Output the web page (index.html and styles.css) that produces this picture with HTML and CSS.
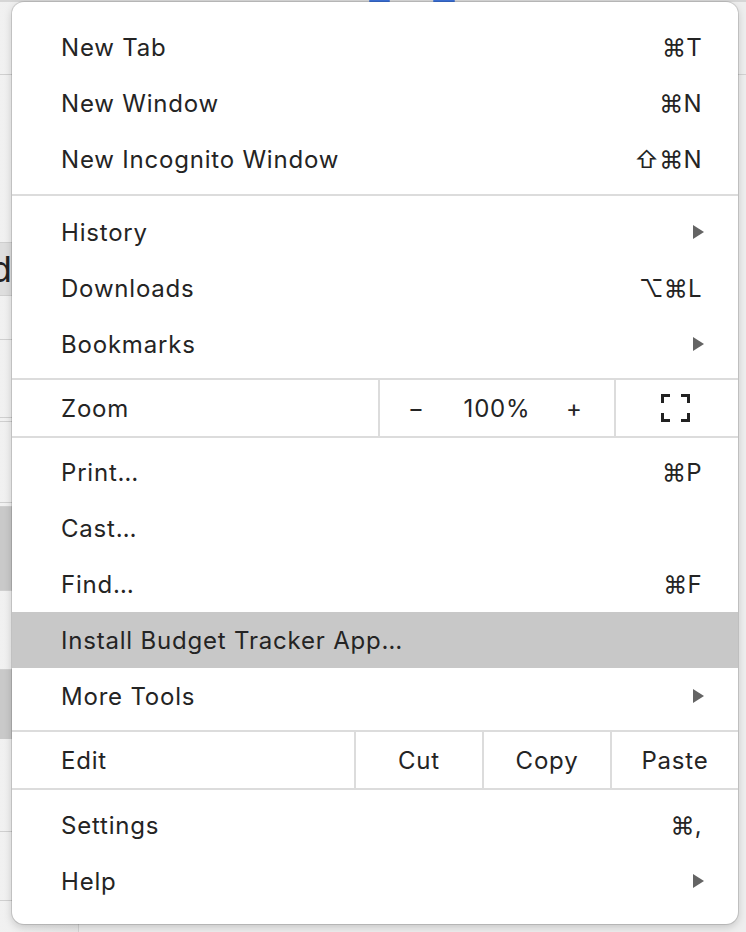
FILE: index.html
```html
<!DOCTYPE html>
<html>
<head>
<meta charset="utf-8">
<link rel="stylesheet" href="styles.css">
</head>
<body>
<div class="backdrop">
  <div class="topbar"><span class="tab-mark first"></span><span class="tab-mark second"></span></div>
  <div class="page">
    <div class="sidebar">
      <div class="sb-row h72"></div>
      <div class="sb-row h167 line"></div>
      <div class="sb-row h53 line shade1"><span class="cut-letter"><span>d</span></span></div>
      <div class="sb-row h44 line"></div>
      <div class="sb-row h78 line"></div>
      <div class="sb-row h4 line"></div>
      <div class="sb-row h81 line"></div>
      <div class="sb-row h4 line"></div>
      <div class="sb-row h80 line shade2"></div>
      <div class="sb-row h79 line"></div>
      <div class="sb-row h70 line shade2"></div>
      <div class="sb-row h92"></div>
      <div class="sb-row h69 line"></div>
      <div class="sb-row h30 line"></div>
    </div>
    <div class="main-area">
      <div class="main-top"></div>
    </div>
  </div>
</div>

<div class="menu">
  <div class="section sec-first">
    <div class="item"><span class="label">New Tab</span><span class="key">⌘T</span></div>
    <div class="item"><span class="label">New Window</span><span class="key">⌘N</span></div>
    <div class="item"><span class="label">New Incognito Window</span><span class="key">⇧⌘N</span></div>
  </div>
  <div class="rule"></div>
  <div class="section sec-second">
    <div class="item"><span class="label">History</span><svg class="arrow" width="11" height="14" viewBox="0 0 11 14"><polygon points="0,0 11,7 0,14" /></svg></div>
    <div class="item"><span class="label">Downloads</span><span class="key">⌥⌘L</span></div>
    <div class="item"><span class="label">Bookmarks</span><svg class="arrow" width="11" height="14" viewBox="0 0 11 14"><polygon points="0,0 11,7 0,14" /></svg></div>
  </div>
  <div class="zoom-row">
    <div class="cell label-cell label">Zoom</div>
    <div class="cell zoom-ctrl">
      <span>−</span><span class="label">100%</span><span>+</span>
    </div>
    <div class="cell full-cell">
      <svg width="29" height="28" viewBox="0 0 29 28" class="fs-icon">
        <path d="M0 0H9V3H3V9H0Z"/>
        <path d="M20 0H29V9H26V3H20Z"/>
        <path d="M0 19H3V25H9V28H0Z"/>
        <path d="M26 19H29V28H20V25H26Z"/>
      </svg>
    </div>
  </div>
  <div class="section sec-third">
    <div class="item"><span class="label">Print…</span><span class="key">⌘P</span></div>
    <div class="item"><span class="label">Cast…</span></div>
    <div class="item"><span class="label">Find…</span><span class="key">⌘F</span></div>
    <div class="item active"><span class="label">Install Budget Tracker App…</span></div>
    <div class="item"><span class="label">More Tools</span><svg class="arrow" width="11" height="14" viewBox="0 0 11 14"><polygon points="0,0 11,7 0,14" /></svg></div>
  </div>
  <div class="edit-row">
    <div class="cell label-cell label">Edit</div>
    <div class="cell btn label">Cut</div>
    <div class="cell btn label">Copy</div>
    <div class="cell btn label">Paste</div>
  </div>
  <div class="section sec-last">
    <div class="item"><span class="label">Settings</span><span class="key">⌘,</span></div>
    <div class="item"><span class="label">Help</span><svg class="arrow" width="11" height="14" viewBox="0 0 11 14"><polygon points="0,0 11,7 0,14" /></svg></div>
  </div>
</div>
</body>
</html>
```
FILE: styles.css
```css
* { box-sizing: border-box; }
html, body { margin: 0; padding: 0; }
body {
  width: 746px;
  height: 932px;
  overflow: hidden;
  background: #ededed;
  font-family: Inter, "DejaVu Sans", sans-serif;
  position: relative;
}

/* ---------- backdrop page ---------- */
.backdrop { display: flex; flex-direction: column; height: 932px; }
.topbar {
  height: 2px;
  background: #d6d6d6;
  display: flex;
}
.tab-mark { width: 21px; height: 2px; background: #3b6fd6; border-radius: 1px; }
.tab-mark.first { margin-left: 369px; }
.tab-mark.second { margin-left: 43px; width: 22px; }
.page { flex: 1; display: flex; }
.sidebar {
  width: 79px;
  border-right: 1px solid #d4d4d4;
  background: linear-gradient(to right, #f1f1f1, #e9e9e9);
  display: flex;
  flex-direction: column;
}
.sb-row { flex: none; overflow: hidden; }
.sb-row.line { border-top: 1px solid #cfcfcf; }
.h72 { height: 72px; }
.h167 { height: 168px; }
.h53 { height: 53px; }
.h44 { height: 44px; }
.h78 { height: 78px; }
.h4 { height: 4px; }
.h81 { height: 81px; }
.h80 { height: 84px; }
.h79 { height: 79px; }
.h70 { height: 70px; }
.h92 { height: 92px; }
.h69 { height: 69px; }
.h30 { height: 30px; }
.shade1 { background: #dedede; }
.shade2 { background: #c9c9c9; }
.cut-letter {
  display: flex;
  justify-content: flex-end;
  width: 12px;
  height: 52px;
  align-items: center;
  font-size: 36px;
  color: #222;
}
.cut-letter span { flex: none; }
.main-area { flex: 1; background: #eeeeee; }
.main-top { height: 73px; border-bottom: 1px solid #d2d2d2; }

/* ---------- menu ---------- */
.menu {
  position: absolute;
  left: 12px;
  top: 2px;
  width: 726px;
  background: #ffffff;
  border-radius: 12px;
  box-shadow: 0 0 0 1px rgba(0,0,0,0.12), 0 3px 8px rgba(0,0,0,0.18);
  color: #242424;
  font-size: 24px;
  overflow: hidden;
}
.label { letter-spacing: 0.8px; }
.section { display: flex; flex-direction: column; }
.sec-first { padding: 17px 0 7px; }
.sec-second { padding: 8px 0 6px; }
.sec-third { padding: 6px 0 6px; }
.sec-last { padding: 7px 0 15px; }
.rule { height: 2px; background: #dcdcdc; }

.item {
  height: 56px;
  display: flex;
  align-items: center;
  justify-content: space-between;
  padding: 0 36px 0 49px;
  white-space: nowrap;
}
.item.active { background: #c8c8c8; }
.key { letter-spacing: 0.3px; }
.arrow { fill: #646464; margin-right: -2px; }

.zoom-row, .edit-row {
  display: grid;
  border-top: 2px solid #dcdcdc;
  border-bottom: 2px solid #dcdcdc;
  height: 60px;
}
.zoom-row { grid-template-columns: 366px 236px 124px; }
.edit-row { grid-template-columns: 342px 128px 128px 128px; }
.cell {
  display: flex;
  align-items: center;
  height: 56px;
}
.label-cell { padding-left: 49px; }
.zoom-ctrl, .full-cell, .btn { border-left: 2px solid #dcdcdc; }
.zoom-ctrl {
  display: grid;
  grid-template-columns: 72px 90px 64px;
  justify-items: center;
}
.full-cell { justify-content: center; padding-right: 3px; }
.fs-icon { fill: #222; }
.btn { justify-content: center; }
```
